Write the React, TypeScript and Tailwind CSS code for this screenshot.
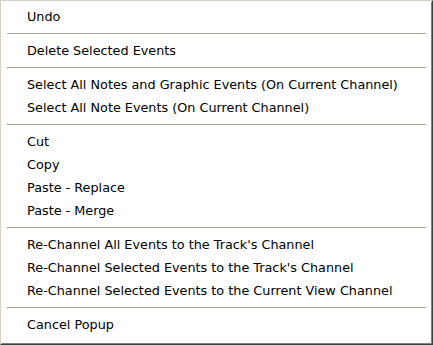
import React from "react";

type Entry = { label: string } | { sep: true };

const entries: Entry[] = [
  { label: "Undo" },
  { sep: true },
  { label: "Delete Selected Events" },
  { sep: true },
  { label: "Select All Notes and Graphic Events (On Current Channel)" },
  { label: "Select All Note Events (On Current Channel)" },
  { sep: true },
  { label: "Cut" },
  { label: "Copy" },
  { label: "Paste - Replace" },
  { label: "Paste - Merge" },
  { sep: true },
  { label: "Re-Channel All Events to the Track's Channel" },
  { label: "Re-Channel Selected Events to the Track's Channel" },
  { label: "Re-Channel Selected Events to the Current View Channel" },
  { sep: true },
  { label: "Cancel Popup" },
];

export default function App() {
  return (
    <div className="w-[433px] h-[345px] bg-white">
      <div className="w-[433px] h-[345px] border border-t-[#d4d0c8] border-l-[#d4d0c8] border-r-[#404040] border-b-[#404040]">
        <div className="w-full h-full border border-t-white border-l-white border-r-[#808080] border-b-[#808080] bg-white flex flex-col pt-[3px] text-black text-[12.8px] [font-family:'DejaVu_Sans',sans-serif]">
          {entries.map((e, i) =>
            "sep" in e ? (
              <div key={i} className="h-[11px] flex flex-col justify-center px-[5px]">
                <div className="h-px bg-[#aca899]" />
                <div className="h-px bg-white" />
              </div>
            ) : (
              <div key={i} className="h-[23px] flex items-center pl-[25px] whitespace-nowrap">
                {e.label}
              </div>
            )
          )}
        </div>
      </div>
    </div>
  );
}
